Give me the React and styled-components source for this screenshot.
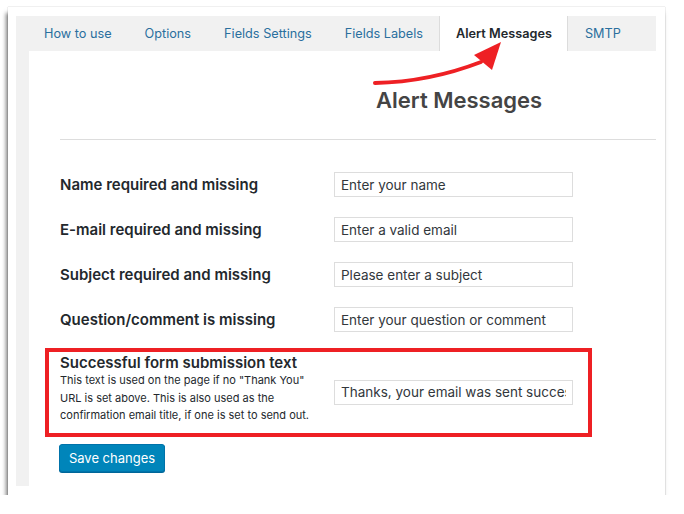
import React from "react";
import styled, { createGlobalStyle } from "styled-components";

const GlobalStyle = createGlobalStyle`
  html, body {
    margin: 0;
    background: #ffffff;
    font-family: Inter, "Liberation Sans", Arial, sans-serif;
  }
`;

const Page = styled.div`
  padding: 7px 0 0 8px;
`;

const Frame = styled.div`
  width: 657px;
  height: 488px;
  box-sizing: border-box;
  padding: 9px 9px 9px 8px;
  background: #ffffff;
  box-shadow: -2px 6px 4px rgba(0, 0, 0, 0.5), 0 0 1px rgba(0, 0, 0, 0.35);
`;

const Screen = styled.div`
  display: flex;
  flex-direction: column;
  height: 100%;
  background: #f1f1f1;
`;

const TabBar = styled.div`
  display: flex;
  height: 35px;
  padding-left: 11px;
`;

const Tab = styled.div`
  display: flex;
  align-items: center;
  padding: 0 15px 0 16px;
  white-space: nowrap;
  font-size: 12.7px;
  color: ${(p) => (p.$active ? "#23282d" : "#2a6f9e")};
  font-weight: ${(p) => (p.$active ? 600 : 400)};
  background: ${(p) => (p.$active ? "#ffffff" : "transparent")};
  border-left: 1px solid ${(p) => (p.$active ? "#dcdcdc" : "transparent")};
  border-right: 1px solid ${(p) => (p.$active ? "#dcdcdc" : "transparent")};
`;

const Panel = styled.div`
  position: relative;
  flex: 1;
  margin-left: 13px;
  background: #ffffff;
`;

const Heading = styled.h2`
  margin: 0;
  padding: 35px 0 0 347px;
  font-size: 22px;
  line-height: 28px;
  font-weight: 600;
  color: #444444;
`;

const Divider = styled.hr`
  margin: 25px 0 0 31px;
  border: 0;
  border-top: 1px solid #dddddd;
`;

const Form = styled.div`
  display: flex;
  flex-direction: column;
  gap: 20px;
  padding: 32px 0 0 31px;
`;

const Row = styled.div`
  display: grid;
  grid-template-columns: 274px 239px;
  align-items: center;
  width: ${(p) => (p.$highlight ? "547px" : "513px")};
  box-sizing: border-box;
  margin-left: ${(p) => (p.$highlight ? "-15px" : "0")};
  margin-top: ${(p) => (p.$highlight ? "-4px" : "0")};
  padding: ${(p) => (p.$highlight ? "0 15px 0 11px" : "0")};
  border: ${(p) => (p.$highlight ? "4px solid #ee2024" : "0")};
`;

const Label = styled.div`
  font-size: 15px;
  font-weight: 600;
  color: #23282d;
`;

const LabelBlock = styled.div`
  padding: 1px 0 8px;
`;

const Hint = styled.div`
  font-size: 11px;
  line-height: 17.5px;
  color: #23282d;
  width: 258px;
`;

const TextInput = styled.input`
  width: 239px;
  height: 25px;
  box-sizing: border-box;
  padding: 0 6px;
  border: 1px solid #dddddd;
  font-family: Inter, "Liberation Sans", Arial, sans-serif;
  font-size: 13.5px;
  color: #32373c;
  background: #ffffff;
  outline: none;
`;

const SaveButton = styled.button`
  align-self: flex-start;
  margin-top: -13px;
  margin-left: -1px;
  height: 28px;
  width: 106px;
  padding: 0;
  border: 1px solid #0073aa;
  border-radius: 3px;
  background: #0085ba;
  color: #ffffff;
  font-family: Inter, "Liberation Sans", Arial, sans-serif;
  font-size: 13px;
  box-shadow: 0 1px 0 #006799;
`;

const ArrowLayer = styled.svg`
  position: absolute;
  left: 0;
  top: -40px;
  pointer-events: none;
`;

const tabs = [
  "How to use",
  "Options",
  "Fields Settings",
  "Fields Labels",
  "Alert Messages",
  "SMTP",
];

const fields = [
  ["Name required and missing", "Enter your name"],
  ["E-mail required and missing", "Enter a valid email"],
  ["Subject required and missing", "Please enter a subject"],
  ["Question/comment is missing", "Enter your question or comment"],
];

// panel origin is (29, 51) in page coords, the layer starts 40px above it
const Arrow = () => (
  <ArrowLayer width="627" height="80" viewBox="0 -40 627 80">
    <path
      d="M346 32 Q 400 31 452 11"
      fill="none"
      stroke="#ee2024"
      strokeWidth="4"
      strokeLinecap="round"
    />
    <polygon points="472,-9 445,4 463,19" fill="#ee2024" />
  </ArrowLayer>
);

export default function App() {
  return (
    <>
      <GlobalStyle />
      <Page>
        <Frame>
          <Screen>
            <TabBar>
              {tabs.map((t) => (
                <Tab key={t} $active={t === "Alert Messages"}>
                  {t}
                </Tab>
              ))}
            </TabBar>
            <Panel>
              <Arrow />
              <Heading>Alert Messages</Heading>
              <Divider />
              <Form>
                {fields.map(([label, value]) => (
                  <Row key={label}>
                    <Label>{label}</Label>
                    <TextInput defaultValue={value} />
                  </Row>
                ))}
                <Row $highlight>
                  <LabelBlock>
                    <Label>Successful form submission text</Label>
                    <Hint>
                      This text is used on the page if no "Thank You" URL is set
                      above. This is also used as the confirmation email title, if
                      one is set to send out.
                    </Hint>
                  </LabelBlock>
                  <TextInput defaultValue="Thanks, your email was sent successfully." />
                </Row>
                <SaveButton>Save changes</SaveButton>
              </Form>
            </Panel>
          </Screen>
        </Frame>
      </Page>
    </>
  );
}
